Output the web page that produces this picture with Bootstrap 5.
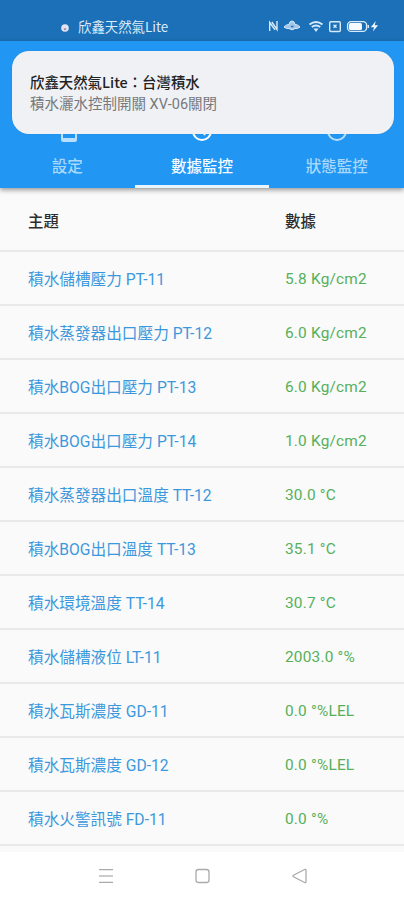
<!DOCTYPE html>
<html lang="zh-Hant">
<head>
<meta charset="utf-8">
<meta name="viewport" content="width=device-width, initial-scale=1">
<title>欣鑫天然氣Lite</title>
<link rel="stylesheet" href="https://cdn.jsdelivr.net/npm/bootstrap@5.3.0/dist/css/bootstrap.min.css">
<style>
body{font-family:Roboto,"Noto Sans CJK TC",sans-serif;background:#fafafa;height:900px;width:404px;overflow:hidden;line-height:1}
svg{display:block;flex:none}
.statusbar{height:41px;background:#1b70b7;color:#dcebf8;padding:12px 25px 0 61px}
.app-name{font:400 13.4px/20px "Noto Sans CJK TC",sans-serif;padding-top:4px;margin-left:9px}
.tabs{height:147px;background:#2196f3;box-shadow:0 2px 5px rgba(0,0,0,.4)}
.tab-item{padding-top:84px;color:#a9d8fb;font-weight:500;font-size:15.5px;line-height:20px;border-bottom:3px solid transparent}
.tab-item.active{color:#f2faff;border-bottom-color:#e8f5fe}
.tab-item span{margin-top:12px}
.toast-box{left:12px;top:51px;width:382px;height:83px;border-radius:17px;background:#f0f1f5;padding:19px 18px;box-shadow:0 0 1px rgba(0,0,0,.2)}
.toast-title{font:500 14.4px/23px "Noto Sans CJK TC",sans-serif;color:#222}
.toast-text{font-size:14.5px;line-height:23px;color:#77797c}
.data-row{height:54px;border-bottom:2px solid #e9e9e9;padding-left:28px;font-size:15.65px;line-height:20px}
.head-row{height:64px;color:#2c2c2c;font-weight:500;font-size:15.4px;padding-top:5px}
.topic{width:257px;color:#3c98dc;padding-top:3px}
.reading{color:#56b05a;font-size:15.4px;letter-spacing:.2px;padding-top:1px}
.head-row .topic,.head-row .reading{color:inherit;padding:0;letter-spacing:0}
.list-area{height:664px;overflow:hidden}
.navkeys{height:48px;background:#fff}
</style>
<script src="https://cdn.jsdelivr.net/npm/bootstrap@5.3.0/dist/js/bootstrap.bundle.min.js"></script>
</head>
<body class="position-relative">
<header class="statusbar d-flex align-items-start">
  <svg class="mt-2 pt-1" width="8" height="14" viewBox="0 0 8 10"><circle cx="4" cy="4" r="3.8" fill="#e3e5f2"/><path d="M2.500 4.500h3L4 6.500z" fill="#8a6a86"/></svg>
  <span class="app-name me-auto">欣鑫天然氣Lite</span>
  <svg width="112" height="28" viewBox="0 0 112 28" fill="none" stroke="#d9ebfa" stroke-width="1.4">
    <path d="M2.700 19V10.500L8 17.800M4.800 10L10 17.500V9"/>
    <path d="M17 15q2.500-2.700 5-2.500q.5-3.500 3-3.500t3 3.500q2.500-.2 5 2.500q-2.500 2-5 1.500q-3 2.600-6 0q-2.500.5-5-1.500z" fill="#9fc5e8" stroke-width="1"/>
    <path d="M24 14.500h2.500" stroke="#1b70b7"/>
    <path d="M42.500 12.500q6.500-5 13 0M44.800 15q4.200-3 8.400 0" stroke-width="1.900"/><path d="M46.500 16.500h5L49 20z" fill="#d9ebfa" stroke="none"/>
    <rect x="62.700" y="9.700" width="10.600" height="9.800" rx="1.200"/><path d="M66.500 12.800l3 3m0-3l-3 3" stroke-width="1.300"/>
    <rect x="80.600" y="9.600" width="19" height="9.800" rx="3.500"/><rect x="82" y="11" width="13" height="7" rx="1.500" fill="#f5faff" stroke="none"/><path d="M101.300 13v3"/>
    <path d="M108.800 9l-5 6.200h3.300l-1.200 4.300 5.200-6.300h-3.400z" fill="#eef7ff" stroke="none"/>
  </svg>
</header>
<nav class="tabs d-flex position-relative">
  <div class="tab-item col-4 d-flex flex-column align-items-center">
    <svg class="ms-1" width="18" height="20" viewBox="0 0 18 20" fill="none" stroke="#b9dffc" stroke-width="2"><rect x="2" y="0" width="14" height="16" rx="1.500"/><path d="M2 14.500h14" stroke-width="3"/></svg><span>設定</span>
  </div>
  <div class="tab-item active col-4 d-flex flex-column align-items-center">
    <svg width="22" height="20" viewBox="0 0 22 20" fill="none" stroke="#fff" stroke-width="2"><circle cx="11" cy="6" r="9"/><path d="M11 6l3 4"/></svg><span>數據監控</span>
  </div>
  <div class="tab-item col-4 d-flex flex-column align-items-center">
    <svg width="22" height="20" viewBox="0 0 22 20" fill="none" stroke="#b9dffc" stroke-width="2"><circle cx="11" cy="6" r="9"/></svg><span>狀態監控</span>
  </div>
</nav>
<div class="toast-box position-absolute">
  <div class="toast-title">欣鑫天然氣Lite：台灣積水</div>
  <div class="toast-text">積水灑水控制開關 XV-06關閉</div>
</div>
<main class="list-area">
  <div class="data-row head-row d-flex align-items-center"><div class="topic">主題</div><div class="reading">數據</div></div>
  <div class="data-row d-flex align-items-center"><div class="topic">積水儲槽壓力 PT-11</div><div class="reading">5.8 Kg/cm2</div></div>
  <div class="data-row d-flex align-items-center"><div class="topic">積水蒸發器出口壓力 PT-12</div><div class="reading">6.0 Kg/cm2</div></div>
  <div class="data-row d-flex align-items-center"><div class="topic">積水BOG出口壓力 PT-13</div><div class="reading">6.0 Kg/cm2</div></div>
  <div class="data-row d-flex align-items-center"><div class="topic">積水BOG出口壓力 PT-14</div><div class="reading">1.0 Kg/cm2</div></div>
  <div class="data-row d-flex align-items-center"><div class="topic">積水蒸發器出口溫度 TT-12</div><div class="reading">30.0 °C</div></div>
  <div class="data-row d-flex align-items-center"><div class="topic">積水BOG出口溫度 TT-13</div><div class="reading">35.1 °C</div></div>
  <div class="data-row d-flex align-items-center"><div class="topic">積水環境溫度 TT-14</div><div class="reading">30.7 °C</div></div>
  <div class="data-row d-flex align-items-center"><div class="topic">積水儲槽液位 LT-11</div><div class="reading">2003.0 °%</div></div>
  <div class="data-row d-flex align-items-center"><div class="topic">積水瓦斯濃度 GD-11</div><div class="reading">0.0 °%LEL</div></div>
  <div class="data-row d-flex align-items-center"><div class="topic">積水瓦斯濃度 GD-12</div><div class="reading">0.0 °%LEL</div></div>
  <div class="data-row d-flex align-items-center"><div class="topic">積水火警訊號 FD-11</div><div class="reading">0.0 °%</div></div>
</main>
<footer class="navkeys">
  <svg width="404" height="48" viewBox="0 0 404 48" fill="none" stroke="#aaa" stroke-width="1.300">
    <path d="M99 17.600h14M99 30.300h14"/><path d="M99 24h14" stroke="#ccc" stroke-width="2"/>
    <rect x="196" y="17.500" width="13" height="13" rx="2.500"/>
    <path d="M304.500 17.500q1.500-.7 1.500 1v11q0 1.700-1.500 1l-11-5.700q-1.300-.8 0-1.600z"/>
  </svg>
</footer>
</body>
</html>
